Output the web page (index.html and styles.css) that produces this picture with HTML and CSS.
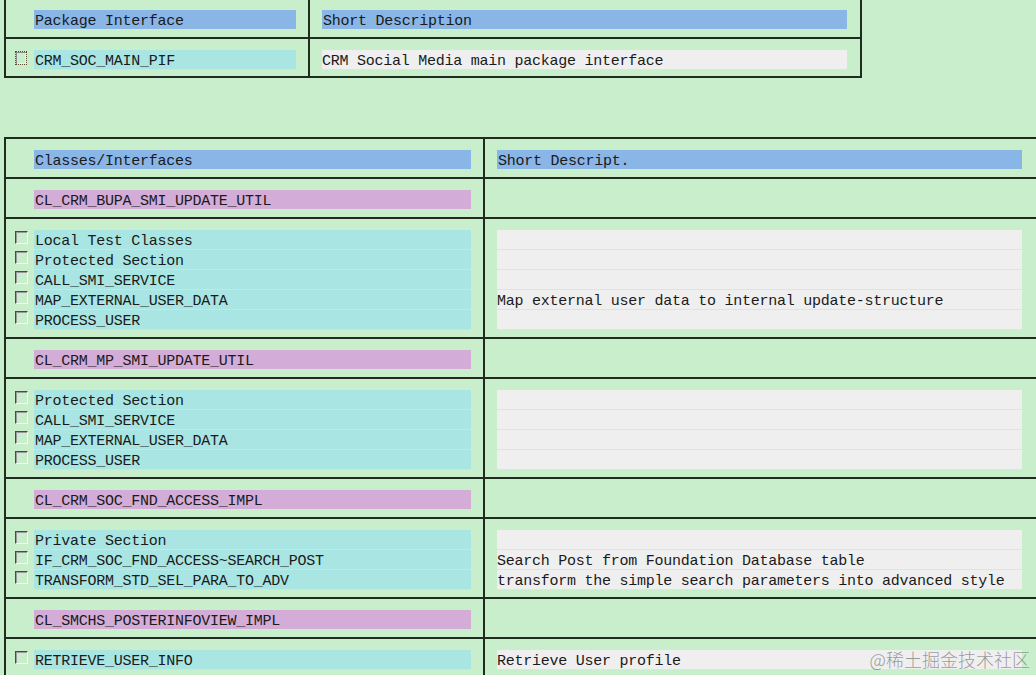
FILE: index.html
```html
<!DOCTYPE html>
<html>
<head>
<meta charset="utf-8">
<link rel="stylesheet" href="styles.css">
</head>
<body>
<div class="page">
  <div class="tbl tbl-pkg">
    <div class="row">
      <div class="cell left">
        <div class="line"><span class="cb-slot"></span><span class="band blue">Package Interface</span></div>
      </div>
      <div class="cell right">
        <div class="line"><span class="band blue">Short Description</span></div>
      </div>
    </div>
    <div class="row last">
      <div class="cell left">
        <div class="line"><span class="cb-slot"><i class="cb focus"></i></span><span class="band cyan">CRM_SOC_MAIN_PIF</span></div>
      </div>
      <div class="cell right">
        <div class="line"><span class="band gray">CRM Social Media main package interface</span></div>
      </div>
    </div>
  </div>

  <div class="tbl tbl-cls">
    <div class="row">
      <div class="cell left">
        <div class="line"><span class="cb-slot"></span><span class="band blue">Classes/Interfaces</span></div>
      </div>
      <div class="cell right">
        <div class="line"><span class="band blue">Short Descript.</span></div>
      </div>
    </div>

    <div class="row">
      <div class="cell left">
        <div class="line"><span class="cb-slot"></span><span class="band pink">CL_CRM_BUPA_SMI_UPDATE_UTIL</span></div>
      </div>
      <div class="cell right"><div class="line"></div></div>
    </div>
    <div class="row">
      <div class="cell left">
        <div class="line"><span class="cb-slot"><i class="cb"></i></span><span class="band cyan">Local Test Classes</span></div>
        <div class="line"><span class="cb-slot"><i class="cb"></i></span><span class="band cyan">Protected Section</span></div>
        <div class="line"><span class="cb-slot"><i class="cb"></i></span><span class="band cyan">CALL_SMI_SERVICE</span></div>
        <div class="line"><span class="cb-slot"><i class="cb"></i></span><span class="band cyan">MAP_EXTERNAL_USER_DATA</span></div>
        <div class="line"><span class="cb-slot"><i class="cb"></i></span><span class="band cyan">PROCESS_USER</span></div>
      </div>
      <div class="cell right">
        <div class="line"><span class="band gray"></span></div>
        <div class="line"><span class="band gray"></span></div>
        <div class="line"><span class="band gray"></span></div>
        <div class="line"><span class="band gray">Map external user data to internal update-structure</span></div>
        <div class="line"><span class="band gray"></span></div>
      </div>
    </div>

    <div class="row">
      <div class="cell left">
        <div class="line"><span class="cb-slot"></span><span class="band pink">CL_CRM_MP_SMI_UPDATE_UTIL</span></div>
      </div>
      <div class="cell right"><div class="line"></div></div>
    </div>
    <div class="row">
      <div class="cell left">
        <div class="line"><span class="cb-slot"><i class="cb"></i></span><span class="band cyan">Protected Section</span></div>
        <div class="line"><span class="cb-slot"><i class="cb"></i></span><span class="band cyan">CALL_SMI_SERVICE</span></div>
        <div class="line"><span class="cb-slot"><i class="cb"></i></span><span class="band cyan">MAP_EXTERNAL_USER_DATA</span></div>
        <div class="line"><span class="cb-slot"><i class="cb"></i></span><span class="band cyan">PROCESS_USER</span></div>
      </div>
      <div class="cell right">
        <div class="line"><span class="band gray"></span></div>
        <div class="line"><span class="band gray"></span></div>
        <div class="line"><span class="band gray"></span></div>
        <div class="line"><span class="band gray"></span></div>
      </div>
    </div>

    <div class="row">
      <div class="cell left">
        <div class="line"><span class="cb-slot"></span><span class="band pink">CL_CRM_SOC_FND_ACCESS_IMPL</span></div>
      </div>
      <div class="cell right"><div class="line"></div></div>
    </div>
    <div class="row">
      <div class="cell left">
        <div class="line"><span class="cb-slot"><i class="cb"></i></span><span class="band cyan">Private Section</span></div>
        <div class="line"><span class="cb-slot"><i class="cb"></i></span><span class="band cyan">IF_CRM_SOC_FND_ACCESS~SEARCH_POST</span></div>
        <div class="line"><span class="cb-slot"><i class="cb"></i></span><span class="band cyan">TRANSFORM_STD_SEL_PARA_TO_ADV</span></div>
      </div>
      <div class="cell right">
        <div class="line"><span class="band gray"></span></div>
        <div class="line"><span class="band gray">Search Post from Foundation Database table</span></div>
        <div class="line"><span class="band gray">transform the simple search parameters into advanced style</span></div>
      </div>
    </div>

    <div class="row">
      <div class="cell left">
        <div class="line"><span class="cb-slot"></span><span class="band pink">CL_SMCHS_POSTERINFOVIEW_IMPL</span></div>
      </div>
      <div class="cell right"><div class="line"></div></div>
    </div>
    <div class="row">
      <div class="cell left">
        <div class="line"><span class="cb-slot"><i class="cb"></i></span><span class="band cyan">RETRIEVE_USER_INFO</span></div>
      </div>
      <div class="cell right">
        <div class="line"><span class="band gray">Retrieve User profile</span></div>
      </div>
    </div>
  </div>
</div>
<div class="watermark">@稀土掘金技术社区</div>
</body>
</html>
```

FILE: styles.css
```css
html, body {
  margin: 0;
  padding: 0;
}
body {
  width: 1036px;
  height: 675px;
  overflow: hidden;
  background: #c8eecc;
  font-family: "Liberation Mono", "DejaVu Sans Mono", monospace;
  font-size: 15px;
  letter-spacing: -0.25px;
  color: #1a1a1a;
  position: relative;
}
.page {
  padding-left: 4px;
}
.tbl {
  border-left: 2px solid #1f2b1f;
  border-right: 2px solid #1f2b1f;
  border-bottom: 2px solid #1f2b1f;
}
.tbl-pkg {
  width: 858px;
  box-sizing: border-box;
  margin-top: -3px;
}
.tbl-pkg .row {
  grid-template-columns: 304px 550px;
}
.tbl-cls {
  width: 1034px;
  box-sizing: border-box;
  margin-top: 59px;
}
.tbl-cls .row {
  grid-template-columns: 479px 551px;
}
.row {
  display: grid;
  border-top: 2px solid #1f2b1f;
}
.cell {
  padding: 11px 0 7px 0;
  box-sizing: border-box;
}
.tbl-pkg .row.last .cell {
  padding-bottom: 6px;
}
.cell.left {
  border-right: 2px solid #1f2b1f;
  padding-left: 9px;
  padding-right: 12px;
}
.cell.right {
  padding-left: 12px;
  padding-right: 13px;
}
.tbl-cls .cell.right {
  padding-right: 14px;
}
.line {
  display: flex;
  height: 20px;
}
.cb-slot {
  flex: 0 0 19px;
  display: flex;
  align-items: flex-start;
  padding-top: 1px;
}
.cb {
  display: block;
  width: 11px;
  height: 11px;
  border: 1px solid;
  border-color: #4a4a4a #f7f7f7 #f7f7f7 #4a4a4a;
  box-shadow: inset 1px 1px 0 #9a9a9a;
}
.cb.focus {
  border: 1px dotted #5a4a30;
  box-shadow: inset 1px 1px 0 #8c8c8c, inset -1px -1px 0 #f0f0f0;
  width: 10px;
  height: 12px;
}
.band {
  flex: 1;
  height: 20px;
  line-height: 24px;
  padding-left: 1px;
  white-space: nowrap;
  overflow: visible;
  box-sizing: border-box;
}
.band.blue {
  background: #89b6e6;
  height: 19px;
}
.band.pink {
  background: #d4acd8;
  height: 19px;
}
.band.cyan {
  background: #a9e6e3;
  border-bottom: 1px solid #b8ece6;
}
.band.gray {
  background: #efefef;
  border-bottom: 1px solid #d2ecdc;
  padding-left: 0;
}
.watermark {
  position: absolute;
  right: 6px;
  top: 646px;
  font-family: "Noto Sans CJK SC", sans-serif;
  font-size: 18px;
  letter-spacing: 0;
  color: rgba(125, 125, 125, 0.75);
  font-weight: 300;
}
```
